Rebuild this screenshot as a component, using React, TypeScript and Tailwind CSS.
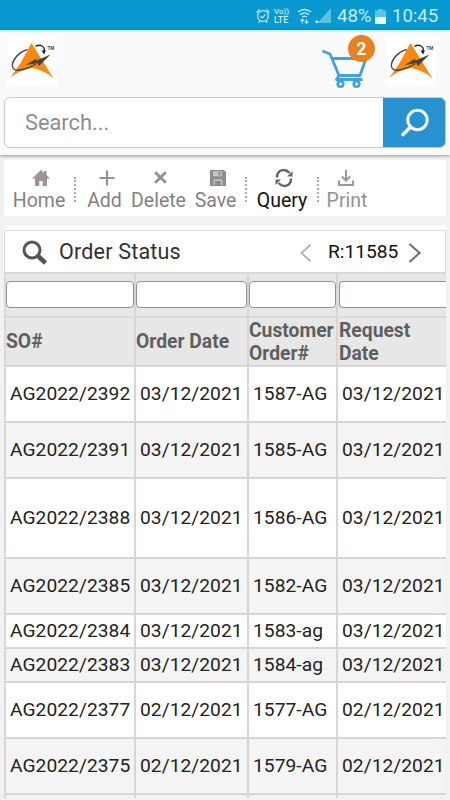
import type { ReactNode } from "react";

const rows = [
  { so: "AG2022/2392", date: "03/12/2021", order: "1587-AG", h: "h-[56px]" },
  { so: "AG2022/2391", date: "03/12/2021", order: "1585-AG", h: "h-[56px]" },
  { so: "AG2022/2388", date: "03/12/2021", order: "1586-AG", h: "h-[80px]" },
  { so: "AG2022/2385", date: "03/12/2021", order: "1582-AG", h: "h-[56px]" },
  { so: "AG2022/2384", date: "03/12/2021", order: "1583-ag", h: "h-[34px]" },
  { so: "AG2022/2383", date: "03/12/2021", order: "1584-ag", h: "h-[34px]" },
  { so: "AG2022/2377", date: "02/12/2021", order: "1577-AG", h: "h-[56px]" },
  { so: "AG2022/2375", date: "02/12/2021", order: "1579-AG", h: "h-[56px]" },
];

const COLS = "grid grid-cols-[130px_113px_89px_108px]";

function Logo() {
  return (
    <svg width="50" height="49" viewBox="0 0 50 49">
      <rect width="50" height="49" fill="#fff" />
      <path d="M24.500 6 46.500 41.500 Q38 33.500 25 31 Q12 33.500 3.500 40.500 L13 27 Z" fill="#fb8a0c" />
      <path d="M20.500 12.500 C10 15.500 3.500 26 6 31 C8.500 35.500 19 32.500 29 27" fill="none" stroke="#444" strokeWidth="1.400" />
      <path d="M18.500 28 L29.500 21.500 L29 23.800 L43.500 17.500 L32 29 L30.500 26.200 Z" fill="#444" />
      <path d="M28.500 9.500 C33 6.500 38.500 9.500 37 14.500" fill="none" stroke="#222" strokeWidth="1.400" />
      <path d="M34.500 13.500 L39 13.500 L37 17.500 Z" fill="#222" />
      <text x="40.500" y="12.500" fontSize="4.500" fontWeight="700" fill="#444" fontFamily="Roboto, sans-serif">TM</text>
    </svg>
  );
}

function StatusBar() {
  return (
    <div className="flex h-[30px] shrink-0 items-center bg-[#0799cf] pt-[2px] pl-[255px] text-[#c5ecfb]">
      <svg width="16" height="16" viewBox="0 0 16 16" fill="none" stroke="currentColor" strokeWidth="1.200">
        <circle cx="8" cy="8" r="5.400" />
        <path d="M1.500 4.500 4.500 1.500M14.500 4.500 11.500 1.500M3.500 14.500l1.500-1.500M12.500 14.500 11 13M5.500 8l2 1.800 3-3.500" />
      </svg>
      <div className="ml-[3px] w-[17px] text-[9px] leading-[8px] font-medium">
        <div className="text-[8px]">Vo))</div>
        <div>LTE</div>
      </div>
      <svg className="ml-[6px]" width="15" height="16" viewBox="0 0 15 16" fill="none" stroke="currentColor" strokeWidth="1.400">
        <path d="M1 4Q7.500-1 14 4M3 6.700Q7.500 3 12 6.700M5.300 9Q7.500 7.200 9.700 9" />
        <path d="M5.300 15.500v-4M3.500 13l1.800-2 1.800 2M9.500 11v4M7.700 13.300l1.800 2 1.800-2" strokeWidth="1.100" />
      </svg>
      <svg className="ml-[3px]" width="17" height="16" viewBox="0 0 17 16">
        <path d="M16 0v15H2.500z" fill="#5cbfe3" />
        <path d="M.5 12.500H3V15H.5z" fill="currentColor" />
      </svg>
      <span className="ml-[5px] w-[36px] text-[18.7px] tracking-[-0.1px] whitespace-nowrap">48%</span>
      <svg className="ml-[2px]" width="11" height="15" viewBox="0 0 11 15">
        <path d="M3 0h5v1.500h3V15H0V1.500h3z" fill="#62c0e3" />
        <path d="M0 8h11v7H0z" fill="#e5fbff" />
      </svg>
      <span className="ml-[6px] pt-px text-[18.5px]">10:45</span>
    </div>
  );
}

function Header() {
  return (
    <header className="relative z-10 h-[125px] shrink-0 border-t-2 border-[#c9f6ff] bg-[#fafafa] shadow-[0_1px_3px_rgba(0,0,0,0.4)]">
      <div className="flex h-[65px] items-start pt-[5px] pl-[7px]">
        <Logo />
        <div className="relative ml-[265px] h-[54px] w-[56px]">
          <svg className="mt-[12px]" width="50" height="42" viewBox="0 0 50 42" fill="none" stroke="#3fa3dc" strokeWidth="2.800">
            <path d="M0.500 2 8 5l9 21.500M10.500 9.500H44L38 26.500H17L14.500 30.500H40.500" strokeLinejoin="round" />
            <circle cx="18.500" cy="35" r="2.800" strokeWidth="2.600" />
            <circle cx="34.500" cy="35" r="2.800" strokeWidth="2.600" />
          </svg>
          <span className="absolute -top-[2px] left-[26px] flex size-[27px] items-center justify-center rounded-full bg-[#e9811e] text-[18px] font-bold text-white">
            2
          </span>
        </div>
        <div className="ml-[8px]">
          <Logo />
        </div>
      </div>
      <div className="mr-[4px] ml-[4px] flex h-[51px] overflow-hidden rounded-[6px] border border-[#c8c8c8] bg-white">
        <div className="flex flex-1 items-center pt-px pl-[20px] text-[21.8px] text-[#8d8d8d]">Search...</div>
        <button className="-my-px -mr-px flex w-[63px] items-center justify-center bg-[#2891cf]">
          <svg width="28" height="30" viewBox="0 0 28 30" fill="none" stroke="#f4fbff">
            <circle cx="16.500" cy="12" r="9.700" strokeWidth="3" />
            <path d="M9.500 19 2 26.500" strokeWidth="3.600" strokeLinecap="round" />
          </svg>
        </button>
      </div>
    </header>
  );
}

function ToolItem({ label, children, className }: { label: string; children: ReactNode; className: string }) {
  return (
    <button className={`flex shrink-0 flex-col items-center text-[19.5px] leading-[22px] whitespace-nowrap ${className}`}>
      <span className="flex h-[25px] items-center justify-center">{children}</span>
      {label}
    </button>
  );
}

function Divider() {
  return <div className="mt-[12px] h-[25px] w-0 shrink-0 border-l-2 border-dotted border-[#aaa]" />;
}

function Toolbar() {
  return (
    <div className="mx-[4px] mt-[5px] flex h-[56px] shrink-0 items-start bg-white pt-[5px]">
      <ToolItem label="Home" className="ml-[9px] w-[52px] text-[#828282]">
        <svg className="ml-[3px]" width="18" height="16" viewBox="0 0 18 16" fill="#9b9596">
          <path d="M9 0 0 8.500h3V16h4.300v-5h3.400v5H15V8.500h3L14.500 5V1H12v2z" />
        </svg>
      </ToolItem>
      <div className="ml-[9px]"><Divider /></div>
      <ToolItem label="Add" className="ml-[11px] w-[35px] text-[#828282]">
        <svg className="ml-[4px]" width="16" height="16" viewBox="0 0 16 16" stroke="#959091" strokeWidth="2.200">
          <path d="M8 .5v15M.5 8h15" />
        </svg>
      </ToolItem>
      <ToolItem label="Delete" className="ml-[9px] w-[55px] text-[#828282]">
        <svg className="ml-[4px]" width="13" height="13" viewBox="0 0 13 13" stroke="#959091" strokeWidth="2.800">
          <path d="M1.200 1.200l10.600 10.600M11.800 1.200 1.200 11.800" />
        </svg>
      </ToolItem>
      <ToolItem label="Save" className="ml-[8px] w-[43px] text-[#828282]">
        <svg className="ml-[4px]" width="16" height="16" viewBox="0 0 16 16">
          <path d="M0 0h14l2 2v14H0z" fill="#918c8d" />
          <path d="M3 1.300h9v5H3zM3.500 9.500h9V15h-9z" fill="#c8c5c6" />
          <path d="M8.500 1.500h2v4h-2zM5 11h6v4H5z" fill="#918c8d" />
        </svg>
      </ToolItem>
      <div className="ml-[8px]"><Divider /></div>
      <ToolItem label="Query" className="ml-[9px] w-[52px] text-[#111]">
        <svg className="ml-[3px]" width="18" height="20" viewBox="0 0 18 20">
          <path d="M2 9.500C2 1.500 10 0 14.500 5M16 10.500C16 18.500 8 20 3.500 15" fill="none" stroke="#666" strokeWidth="2.500" />
          <path d="M17.500 3v5.500H12zM.5 17v-5.500H6z" fill="#666" />
        </svg>
      </ToolItem>
      <div className="ml-[9px]"><Divider /></div>
      <ToolItem label="Print" className="ml-[7px] w-[42px] text-[#929292]">
        <svg className="mr-[2px]" width="16" height="16" viewBox="0 0 16 16" fill="none" stroke="#999" strokeWidth="2">
          <path d="M1 10.500V15h14v-4.500M8 0v10.500M3.800 6.500 8 10.700l4.200-4.200" />
        </svg>
      </ToolItem>
    </div>
  );
}

function TitleBar() {
  return (
    <div className="flex h-[42px] items-center border border-b-0 border-[#dcdcdc] bg-white pt-[2px]">
      <svg className="ml-[17px]" width="26" height="26" viewBox="0 0 26 26" fill="none" stroke="#555">
        <circle cx="10" cy="10" r="8" strokeWidth="3" />
        <path d="M16 16l7.500 7" strokeWidth="4.500" />
      </svg>
      <h1 className="ml-[11px] w-[124px] text-[21.5px] tracking-[0.2px] whitespace-nowrap text-[#303030]">Order Status</h1>
      <svg className="ml-[117px]" width="12" height="20" viewBox="0 0 13 20" fill="none" stroke="#b5b5b5" strokeWidth="2">
        <path d="M11.500 1 1.500 10l10 9" />
      </svg>
      <span className="ml-[16px] w-[70px] text-[19.2px] whitespace-nowrap text-[#111]">R:11585</span>
      <svg className="ml-[10px]" width="13" height="20" viewBox="0 0 13 20" fill="none" stroke="#777" strokeWidth="2.200">
        <path d="M1.500 1l10 9-10 9" />
      </svg>
    </div>
  );
}

const cell = "border-r-2 border-[#d9d5d6] last:border-r-0";

function OrderTable() {
  return (
    <div className="overflow-hidden border-t-2 border-l-2 border-[#d9d7d7]">
      <div className={`${COLS} h-[44px] border-b-2 border-[#dcd8d9] bg-[#e7e7e7]`}>
        {[0, 1, 2, 3].map((i) => (
          <div key={i} className={`${cell} overflow-hidden pt-[7px]`}>
            <div className={`h-[27px] border border-[#929292] bg-white ${i === 3 ? "ml-px rounded-l-[4px] border-r-0" : "rounded-[4px]"}`} />
          </div>
        ))}
      </div>
      <div className={`${COLS} h-[49px] border-b-2 border-[#d9d5d6] bg-[#e7e7e7] text-[19.3px] leading-[23px] font-bold text-[#5f5f5f]`}>
        {["SO#", "Order Date", "Customer Order#", "Request Date"].map((t) => (
          <div key={t} className={`${cell} flex items-center`}>
            <span className={t === "Request Date" ? "w-[80px] pl-px" : ""}>{t}</span>
          </div>
        ))}
      </div>
      {rows.map((r, i) => (
        <div
          key={r.so}
          className={`${COLS} ${r.h} border-b-2 border-[#d9d5d6] text-[19.2px] tracking-[0.05px] text-[#222] ${i % 2 ? "bg-[#f4f4f4]" : "bg-white"}`}
        >
          {[r.so, r.date, r.order, r.date].map((v, c) => (
            <div key={c} className={`${cell} flex items-center pt-px pl-[4px] whitespace-nowrap`}>{v}</div>
          ))}
        </div>
      ))}
      <div className={`${COLS} h-[3px]`}>
        {[0, 1, 2, 3].map((i) => (
          <div key={i} className={cell} />
        ))}
      </div>
    </div>
  );
}

export default function App() {
  return (
    <div className="flex h-[800px] w-[450px] flex-col overflow-hidden bg-[#f2f2f2] font-['Roboto',sans-serif]">
      <StatusBar />
      <Header />
      <Toolbar />
      <main className="mx-[4px] mt-[9px] border-t-[5px] border-[#fbfbfb]">
        <TitleBar />
        <OrderTable />
      </main>
    </div>
  );
}
